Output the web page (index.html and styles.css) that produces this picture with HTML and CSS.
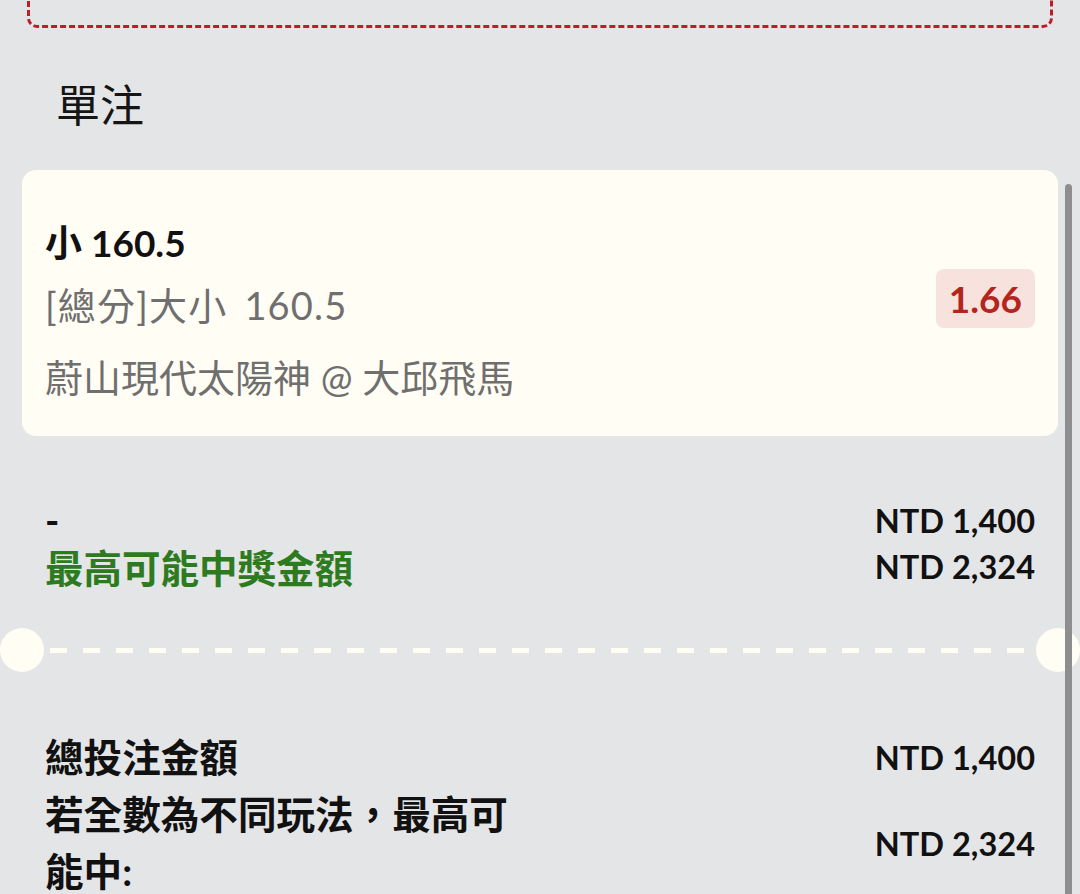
FILE: index.html
```html
<!DOCTYPE html>
<html lang="zh-Hant">
<head>
    <meta charset="UTF-8">
    <meta name="viewport" content="width=device-width, initial-scale=1.0">
    <title>單注</title>
    <link rel="stylesheet" href="styles.css">
</head>
<body>
    <div class="promo-box"></div>

    <h2 class="section-title">單注</h2>

    <div class="bet-card">
        <div class="bet-info">
            <div class="bet-pick">小 160.5</div>
            <div class="bet-market">[總分]大小 160.5</div>
            <div class="bet-match">蔚山現代太陽神 @ 大邱飛馬</div>
        </div>
        <div class="odds">1.66</div>
    </div>

    <div class="summary">
        <div class="summary-row">
            <span class="label">-</span>
            <span class="amount">NTD 1,400</span>
        </div>
        <div class="summary-row">
            <span class="label win">最高可能中獎金額</span>
            <span class="amount">NTD 2,324</span>
        </div>
    </div>

    <div class="ticket-cut">
        <span class="notch"></span>
        <span class="cut-line"></span>
        <span class="notch"></span>
    </div>

    <div class="totals">
        <div class="total-row">
            <span class="total-label">總投注金額</span>
            <span class="amount">NTD 1,400</span>
        </div>
        <div class="total-row">
            <span class="total-label">若全數為不同玩法，最高可能中:</span>
            <span class="amount">NTD 2,324</span>
        </div>
    </div>

    <div class="scrollbar"></div>
</body>
</html>
```

FILE: styles.css
```css
html {
    overflow: hidden;
}
body {
    margin: 0;
    background-color: #e4e5e7;
    font-family: "Lato", "Noto Sans CJK TC", sans-serif;
    color: #111;
}
/* bottom edge of the box above, scrolled mostly out of view */
.promo-box {
    height: 34px;
    margin: -12px 27px 0;
    border: 3px dashed #c01b27;
    border-radius: 0 0 10px 10px;
}
.section-title {
    margin: 47px 0 35px;
    padding-left: 56px;
    font-size: 44px;
    font-weight: normal;
    line-height: 60px;
    color: #151515;
}
.bet-card {
    display: flex;
    align-items: center;
    justify-content: space-between;
    margin: 0 22px;
    padding: 50px 23px 29px 23px;
    background-color: #fffdf4;
    border-radius: 14px;
}
.bet-pick {
    font-size: 37px;
    font-weight: bold;
    line-height: 46px;
    margin-bottom: 9px;
}
.bet-market,
.bet-match {
    font-size: 38px;
    line-height: 60px;
    color: #6f6f6f;
}
.bet-market {
    letter-spacing: 1.2px;
    word-spacing: 6px;
}
.bet-match {
    margin-top: 12px;
}
.odds {
    margin-top: -31px;
    padding: 0 13px;
    line-height: 59px;
    font-size: 37px;
    font-weight: bold;
    color: #b3261e;
    background-color: #f7e2dd;
    border-radius: 8px;
}
.summary {
    margin-top: 61px;
    padding: 0 45px;
}
.summary-row,
.total-row {
    display: flex;
    align-items: center;
    justify-content: space-between;
}
.summary-row {
    height: 46px;
}
.label {
    font-size: 38.5px;
    font-weight: bold;
}
.win {
    color: #2e7b1f;
}
.amount {
    font-size: 32.5px;
    font-weight: bold;
    white-space: nowrap;
}
.ticket-cut {
    display: flex;
    align-items: center;
    margin-top: 39px;
}
.notch {
    width: 44px;
    height: 44px;
    border-radius: 50%;
    background-color: #fffdf4;
    flex: none;
}
.cut-line {
    flex: 1;
    height: 5px;
    margin: 0 5px 0 6px;
    background: repeating-linear-gradient(90deg, #fffdf4 0 17px, transparent 17px 33px);
}
.totals {
    margin-top: 57px;
    padding: 0 45px;
}
.total-label {
    width: 475px;
    font-size: 38.6px;
    font-weight: bold;
    line-height: 57px;
}
.scrollbar {
    position: fixed;
    top: 184px;
    right: 8px;
    bottom: -10px;
    width: 7px;
    border-radius: 4px;
    background-color: #8e8e90;
}
```
